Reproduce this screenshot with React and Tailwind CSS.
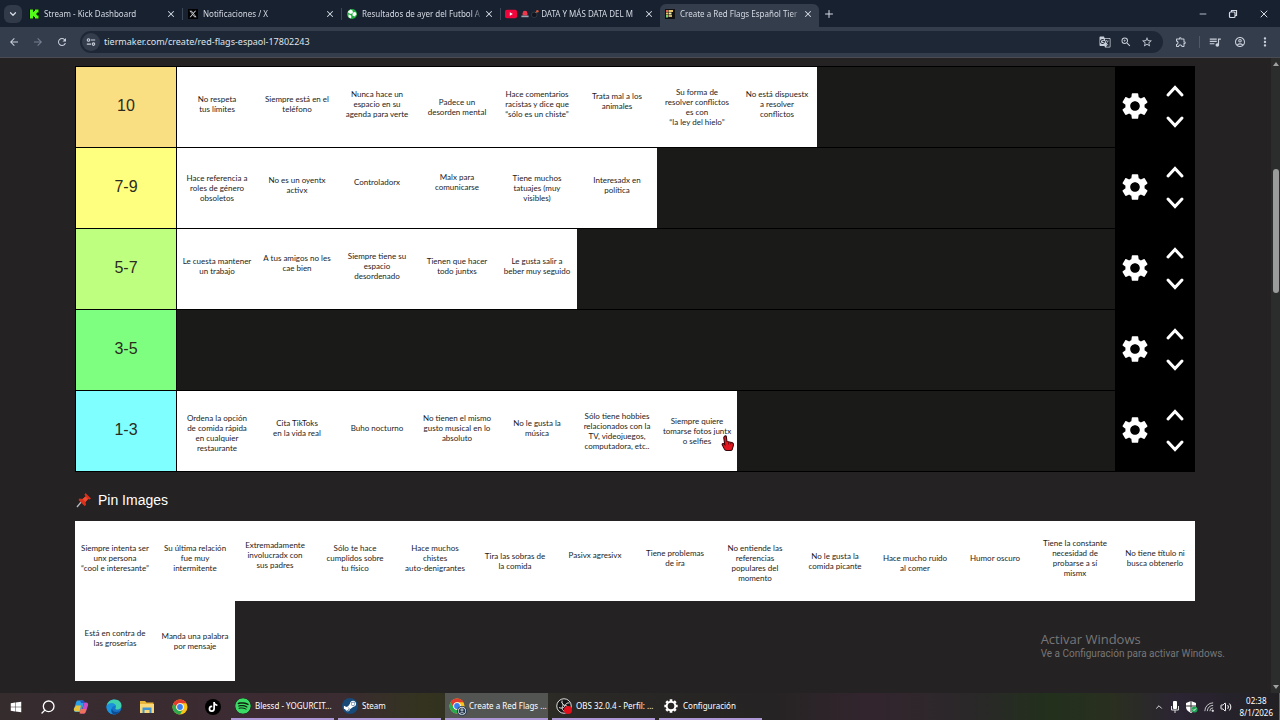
import { useState } from "react";
import {
  MdArrowBack,
  MdArrowForward,
  MdRefresh,
  MdGTranslate,
  MdZoomIn,
  MdStarBorder,
  MdOutlineExtension,
  MdQueueMusic,
  MdOutlineAccountCircle,
  MdMoreVert,
  MdSettings,
} from "react-icons/md";
import { FaXTwitter, FaTiktok, FaSpotify, FaSteamSymbol, FaWindows } from "react-icons/fa6";
import { ChevronDown, ChevronUp, X, Plus, Minus, Search, Volume2 } from "lucide-react";

// vertical placement of the text inside a card
const PLACE = {
  high: "pb-3",
  mid: "pb-1.5",
  low: "",
  lower: "pt-1",
};

const TIERS = [
  {
    label: "10",
    color: "bg-[#fadf82]",
    cards: [
      { text: "No respeta\ntus límites" },
      { text: "Siempre está en el\nteléfono" },
      { text: "Nunca hace un\nespacio en su\nagenda para verte" },
      { text: "Padece un\ndesorden mental", at: "low" },
      { text: "Hace comentarios\nracistas y dice que\n“sólo es un chiste”" },
      { text: "Trata mal a los\nanimales", at: "high" },
      { text: "Su forma de\nresolver conflictos\nes con\n“la ley del hielo”", at: "low" },
      { text: "No está dispuestx\na resolver\nconflictos" },
    ],
  },
  {
    label: "7-9",
    color: "bg-[#ffff7f]",
    cards: [
      { text: "Hace referencia a\nroles de género\nobsoletos", at: "low" },
      { text: "No es un oyentx\nactivx" },
      { text: "Controladorx", at: "high" },
      { text: "Malx para\ncomunicarse", at: "high" },
      { text: "Tiene muchos\ntatuajes (muy\nvisibles)", at: "low" },
      { text: "Interesadx en\npolítica" },
    ],
  },
  {
    label: "5-7",
    color: "bg-[#bfff7f]",
    cards: [
      { text: "Le cuesta mantener\nun trabajo" },
      { text: "A tus amigos no les\ncae bien", at: "high" },
      { text: "Siempre tiene su\nespacio\ndesordenado" },
      { text: "Tienen que hacer\ntodo juntxs" },
      { text: "Le gusta salir a\nbeber muy seguido" },
    ],
  },
  { label: "3-5", color: "bg-[#7fff7f]", cards: [] },
  {
    label: "1-3",
    color: "bg-[#7fffff]",
    cards: [
      { text: "Ordena la opción\nde comida rápida\nen cualquier\nrestaurante", at: "lower" },
      { text: "Cita TikToks\nen la vida real" },
      { text: "Buho nocturno" },
      { text: "No tienen el mismo\ngusto musical en lo\nabsoluto" },
      { text: "No le gusta la\nmúsica" },
      { text: "Sólo tiene hobbies\nrelacionados con la\nTV, videojuegos,\ncomputadora, etc..", at: "low" },
      { text: "Siempre quiere\ntomarse fotos juntx\no selfies", at: "low" },
    ],
  },
];

const POOL = [
  { text: "Siempre intenta ser\nunx persona\n“cool e interesante”" },
  { text: "Su última relación\nfue muy\nintermitente" },
  { text: "Extremadamente\ninvolucradx con\nsus padres", at: "high" },
  { text: "Sólo te hace\ncumplidos sobre\ntu físico" },
  { text: "Hace muchos\nchistes\nauto-denigrantes" },
  { text: "Tira las sobras de\nla comida", at: "low" },
  { text: "Pasivx agresivx", at: "high" },
  { text: "Tiene problemas\nde ira" },
  { text: "No entiende las\nreferencias\npopulares del\nmomento", at: "lower" },
  { text: "No le gusta la\ncomida picante", at: "low" },
  { text: "Hace mucho ruido\nal comer", at: "lower" },
  { text: "Humor oscuro" },
  { text: "Tiene la constante\nnecesidad de\nprobarse a sí\nmismx" },
  { text: "No tiene título ni\nbusca obtenerlo" },
  { text: "Está en contra de\nlas groserías" },
  { text: "Manda una palabra\npor mensaje", at: "low" },
];

function Card({ text, at = "mid" }) {
  return (
    <div
      className={`flex h-20 w-20 shrink-0 items-center justify-center whitespace-pre bg-white text-center font-[Lato,sans-serif] text-[8px] leading-[10px] text-[#1c1c1c] ${PLACE[at]}`}
    >
      {text}
    </div>
  );
}

function KickIcon() {
  return (
    <svg viewBox="0 0 20 20" className="size-2.5">
      <rect width="20" height="20" fill="#0b1a08" />
      <path d="M2 1h6v5h2V4h2V1h7v6h-3v2h-2v2h2v2h3v6h-7v-3h-2v-2H8v5H2z" fill="#53fc18" />
    </svg>
  );
}

function XIcon() {
  return (
    <span className="grid size-2.5 place-items-center bg-black">
      <FaXTwitter className="size-2 text-gray-300" />
    </span>
  );
}

function BallIcon() {
  return (
    <svg viewBox="0 0 20 20" className="size-2.5">
      <circle cx="10" cy="10" r="10" fill="#1fae3c" />
      <path d="M7 1l4 2 1 4-4 3-5-2-1-3zM14 6l4 1 1 4-4 4-4-2 0-4zM3 11l4 1 2 4-2 3-4-3z" fill="#fff" />
    </svg>
  );
}

function YoutubeIcon() {
  return (
    <svg viewBox="0 0 20 20" className="size-3">
      <rect y="3" width="20" height="14" rx="3" fill="#f0043c" />
      <path d="M8 7l5 3-5 3z" fill="#fff" />
    </svg>
  );
}

function TierIcon() {
  return (
    <svg viewBox="0 0 20 20" className="size-2.5">
      <rect width="20" height="20" fill="#111" />
      <path d="M2 2h4v4H2z" fill="#e5645c" />
      <path d="M7 2h9v4H7zM2 7h5v4H2z" fill="#e9c36a" />
      <path d="M8 7h5v4H8z" fill="#f4f0b0" />
      <path d="M2 12h4v5H2z" fill="#7ccf6d" />
      <path d="M7 12h7v4H7z" fill="#c9b26c" />
    </svg>
  );
}

function Siren() {
  return (
    <svg viewBox="0 0 20 20" className="inline size-2">
      <path d="M4 14V8a6 6 0 0112 0v6z" fill="#f0364b" />
      <path d="M1 14h18v4H1z" fill="#9aa3b2" />
    </svg>
  );
}

function Bomb() {
  return (
    <svg viewBox="0 0 20 20" className="inline size-2">
      <circle cx="8" cy="12" r="7" fill="#11161d" stroke="#566172" strokeWidth="1" />
      <path d="M12 7l3-4" stroke="#b0b7c2" strokeWidth="2" />
      <circle cx="16" cy="3" r="3" fill="#e05630" />
    </svg>
  );
}

const TABS = [
  { icon: <KickIcon />, title: "Stream - Kick Dashboard" },
  { icon: <XIcon />, title: "Notificaciones / X" },
  { icon: <BallIcon />, title: "Resultados de ayer del Futbol A" },
  {
    icon: <YoutubeIcon />,
    title: (
      <>
        <Siren /> <Bomb /> DATA Y MÁS DATA DEL M
      </>
    ),
  },
  { icon: <TierIcon />, title: "Create a Red Flags Español Tier", active: true },
];

function TabStrip() {
  return (
    <div className="flex h-[27px] items-end bg-[#182130] text-[#d5dae3]">
      <div className="flex h-full w-6 items-center pl-1">
        <button aria-label="Buscar pestañas" className="grid size-[18px] place-items-center rounded-md bg-[#303a49]">
          <ChevronDown className="size-2.5" strokeWidth={3} />
        </button>
      </div>
      {TABS.map((t, i) => (
        <div
          key={i}
          className={`flex h-[23px] w-[159px] items-center gap-1 pr-1.5 pb-1 pl-1 ${t.active ? "rounded-t-md bg-[#343d4c]" : ""}`}
        >
          <span className="grid w-3 shrink-0 place-items-center">{t.icon}</span>
          <span className="-mr-1 min-w-0 flex-1 overflow-hidden mask-r-from-90% text-[8px] leading-3 whitespace-nowrap">
            {t.title}
          </span>
          <button aria-label="Cerrar pestaña">
            <X className="size-2.5" strokeWidth={2.5} />
          </button>
          {!t.active && i < 3 && <span className="-mr-1.5 ml-0.5 h-3 w-px bg-[#3c4758]" />}
        </div>
      ))}
      <button aria-label="Nueva pestaña" className="ml-1 grid h-[27px] w-3 place-items-center">
        <Plus className="size-3" />
      </button>
      <div className="ml-auto flex h-[27px] items-center gap-5 pr-2.5">
        <button aria-label="Minimizar">
          <Minus className="size-2.5" />
        </button>
        <button aria-label="Restaurar">
          <svg viewBox="0 0 10 10" className="size-2.5" fill="none" stroke="currentColor" strokeWidth="1.2">
            <rect x="1.5" y="3" width="5.5" height="5.5" rx="1" />
            <path d="M3.5 3V1.5h5v5H7" />
          </svg>
        </button>
        <button aria-label="Cerrar">
          <X className="size-3" />
        </button>
      </div>
    </div>
  );
}

function Toolbar() {
  return (
    <div className="flex h-[31px] items-center border-b border-[#4b4b52] bg-[#343d4c] text-[#c9cfda]">
      <div className="flex items-center gap-3 pr-3 pl-2">
        <button aria-label="Atrás">
          <MdArrowBack className="size-3" />
        </button>
        <button aria-label="Adelante" className="text-[#778090]">
          <MdArrowForward className="size-3" />
        </button>
        <button aria-label="Recargar">
          <MdRefresh className="size-3" />
        </button>
      </div>
      <div className="flex h-[22px] flex-1 items-center rounded-full bg-[#1e2735] pr-2.5 pl-0.5">
        <button aria-label="Información del sitio" className="grid size-[18px] place-items-center rounded-full bg-[#343d4c]">
          <svg viewBox="0 0 12 12" className="size-2.5" fill="none" stroke="currentColor" strokeWidth="1.3">
            <circle cx="3" cy="3.5" r="1.5" />
            <path d="M6 3.5h5M1 8.5h5" />
            <circle cx="9" cy="8.5" r="1.5" />
          </svg>
        </button>
        <input
          aria-label="Dirección"
          defaultValue="tiermaker.com/create/red-flags-espaol-17802243"
          className="min-w-0 flex-1 bg-transparent px-1 text-[9px] leading-4 text-[#dfe3ea] outline-none"
        />
        <div className="flex items-center gap-[9px]">
          <button aria-label="Traducir">
            <MdGTranslate className="size-3" />
          </button>
          <button aria-label="Zoom">
            <MdZoomIn className="size-3" />
          </button>
          <button aria-label="Marcador">
            <MdStarBorder className="size-3" />
          </button>
        </div>
      </div>
      <div className="flex items-center gap-3 pr-2 pl-3">
        <button aria-label="Extensiones">
          <MdOutlineExtension className="size-3" />
        </button>
        <span className="-mr-1 h-3 w-px bg-[#4f5969]" />
        <button aria-label="Multimedia">
          <MdQueueMusic className="size-3.5" />
        </button>
        <button aria-label="Perfil">
          <MdOutlineAccountCircle className="size-3" />
        </button>
        <button aria-label="Menú">
          <MdMoreVert className="size-3.5" />
        </button>
      </div>
    </div>
  );
}

function Arrow({ up }) {
  return (
    <svg viewBox="0 0 20 14" className="h-3.5 w-5" fill="none" stroke="#fff" strokeWidth="3" strokeLinecap="round">
      {up ? <path d="M3 11l7-7.500 7 7.500" /> : <path d="M3 3l7 7.500 7-7.500" />}
    </svg>
  );
}

function TierRow({ label, color, cards, onUp, onDown }) {
  return (
    <div className="flex h-[81px] border-b border-black bg-[#1a1a19]">
      <div
        className={`flex w-[101px] shrink-0 items-center justify-center border-r border-black pb-0.5 text-base text-[#2b2b20] ${color}`}
      >
        {label}
      </div>
      <div className="flex min-w-0 flex-1">
        {cards.map((c) => (
          <Card key={c.text} {...c} />
        ))}
      </div>
      <div className="-mb-px flex w-20 shrink-0 bg-black pb-[3px]">
        <button aria-label={`Opciones ${label}`} className="grid w-10 place-items-center text-white">
          <MdSettings className="size-8" />
        </button>
        <div className="flex w-10 flex-col items-center justify-center gap-[17px]">
          <button aria-label={`Subir ${label}`} onClick={onUp}>
            <Arrow up />
          </button>
          <button aria-label={`Bajar ${label}`} onClick={onDown}>
            <Arrow />
          </button>
        </div>
      </div>
    </div>
  );
}

function PushPin() {
  return (
    <svg viewBox="0 0 32 32" className="size-4">
      <path d="M12 18L2 30" stroke="#b8bcc2" strokeWidth="2.5" />
      <path d="M19 2l11 11-3 2-3-1-5 6 1 6-3 2L5 16l2-3 6 1 6-5-2-4z" fill="#d8321d" />
      <path d="M19 9l5 5-5 6-6-6z" fill="#f04a32" />
    </svg>
  );
}

function Watermark() {
  return (
    <div className="absolute right-[55px] bottom-8 text-[#777]">
      <div className="font-['Open_Sans',sans-serif] text-[13px] leading-4">Activar Windows</div>
      <div className="font-[Roboto,sans-serif] text-[10px] leading-[14px]">
        Ve a Configuración para activar Windows.
      </div>
    </div>
  );
}

function Scrollbar() {
  return (
    <div className="flex w-[9px] shrink-0 flex-col items-center justify-between bg-[#2b2d2c] py-1">
      <svg viewBox="0 0 6 4" className="h-1 w-1.5">
        <path d="M3 0l3 4H0z" fill="#a0a0a0" />
      </svg>
      <div className="flex w-full flex-1 flex-col items-center">
        <div className="basis-1/6" />
        <div className="w-1.5 basis-1/5 rounded-full bg-[#9b9b9b]" />
      </div>
      <svg viewBox="0 0 6 4" className="h-1 w-1.5">
        <path d="M0 0h6L3 4z" fill="#a0a0a0" />
      </svg>
    </div>
  );
}

function CopilotIcon() {
  return (
    <svg viewBox="0 0 32 32" className="size-4">
      <path d="M10 3h9c2 0 3 2 3 4l-4 15c-1 3-2 4-4 4H6c-4 0-5-3-4-6L6 7c1-3 2-4 4-4z" fill="#2a9fe6" />
      <path d="M6 13h10l-3 12H6c-4 0-5-3-4-6z" fill="#e8c33b" />
      <path d="M22 7h4c4 0 5 3 4 6l-4 12c-1 3-2 4-4 4h-9c3 0 4-2 5-5z" fill="#c84cc4" />
      <path d="M15 20h12l-2 5c-1 3-2 4-4 4h-8z" fill="#f0705a" />
      <path d="M14 3h6c2 0 3 2 4 5h-8z" fill="#2456c8" />
    </svg>
  );
}

function EdgeIcon() {
  return (
    <svg viewBox="0 0 32 32" className="size-4">
      <circle cx="16" cy="16" r="15" fill="#1674c9" />
      <path d="M1 14C3 5 10 1 17 1c9 0 14 6 14 12 0 5-4 8-8 8-3 0-5-1-4-3 3-5-2-9-7-9-6 0-10 3-11 5z" fill="#3fd0b0" />
      <path d="M1 14c3-5 8-6 12-5 4 0 7 3 7 6-5-3-10 2-8 8 1 3 4 6 8 7C9 33 0 25 1 14z" fill="#1c92dd" />
      <path d="M12 19c0 7 8 9 16 5-3 5-8 7-12 7-5-2-7-8-4-12z" fill="#0d4d95" />
    </svg>
  );
}

function FolderIcon() {
  return (
    <svg viewBox="0 0 32 32" className="size-4">
      <path d="M2 4h10l3 3h14v21H2z" fill="#e9b43a" />
      <path d="M2 10h28v18H2z" fill="#fbd877" />
      <path d="M7 17h18v11h-4v-6H11v6H7z" fill="#3f94d6" />
    </svg>
  );
}

function ChromeIcon() {
  return (
    <svg viewBox="0 0 32 32" className="size-4">
      <circle cx="16" cy="16" r="15" fill="#fbc418" />
      <path d="M3 8.500A15 15 0 0129 8.500H16a7.500 7.500 0 00-6.500 11.300z" fill="#e33b2e" />
      <path d="M3 8.500A15 15 0 0016 31l6.500-11.300A7.500 7.500 0 019.500 19.800z" fill="#2da94f" />
      <circle cx="16" cy="16" r="7.500" fill="#fff" />
      <circle cx="16" cy="16" r="5.800" fill="#3c7fee" />
    </svg>
  );
}

function ObsIcon() {
  return (
    <svg viewBox="0 0 32 32" className="size-4">
      <circle cx="16" cy="16" r="14.500" fill="#161616" stroke="#ddd" strokeWidth="2" />
      <path d="M12 5c-1 7 3 10 7 10 4 1 7 4 7 8M6 19c6 3 11 0 12-4 2-4 5-6 9-5M19 27c-6-1-8-6-6-10 2-3 1-6-2-8" fill="none" stroke="#ddd" strokeWidth="2" />
      <circle cx="24" cy="24" r="8" fill="#e3101c" />
    </svg>
  );
}

function ChromeProfileIcon() {
  return (
    <span className="relative">
      <ChromeIcon />
      <MdOutlineAccountCircle className="absolute -right-0.5 -bottom-0.5 size-2.5 rounded-full bg-[#22364c] text-[#cfd6df]" />
    </span>
  );
}

function SpotifyIcon() {
  return <FaSpotify className="size-4 rounded-full bg-[#10210f] text-[#3bdc66]" />;
}

function SteamIcon() {
  return (
    <span className="grid size-4 place-items-center rounded-full bg-[#174a78]">
      <FaSteamSymbol className="size-3.5 text-white" />
    </span>
  );
}

function GearIcon() {
  return (
    <svg viewBox="0 0 24 24" className="size-4" fill="none" stroke="#fff">
      <circle cx="12" cy="12" r="6.5" strokeWidth="3" />
      <path
        d="M12 2v3M12 19v3M2 12h3M19 12h3M4.900 4.900L7 7M17 17l2.100 2.100M4.900 19.100L7 17M17 7l2.100-2.100"
        strokeWidth="4"
      />
    </svg>
  );
}

const PINNED = [
  { name: "Inicio", icon: <FaWindows className="size-3 text-white" /> },
  { name: "Buscar", icon: <Search className="size-4 -scale-x-100 text-white" /> },
  { name: "Copilot", icon: <CopilotIcon /> },
  { name: "Edge", icon: <EdgeIcon /> },
  { name: "Explorador", icon: <FolderIcon /> },
  { name: "Chrome", icon: <ChromeIcon /> },
  {
    name: "TikTok",
    icon: (
      <span className="grid size-4 place-items-center rounded-full bg-black">
        <FaTiktok className="size-2.5 text-white" />
      </span>
    ),
  },
];

const WINDOWS = [
  { title: "Blessd - YOGURCIT...", icon: <SpotifyIcon /> },
  { title: "Steam", icon: <SteamIcon /> },
  { title: "Create a Red Flags ...", icon: <ChromeProfileIcon />, active: true },
  { title: "OBS 32.0.4 - Perfil: ...", icon: <ObsIcon /> },
  { title: "Configuración", icon: <GearIcon /> },
];

function Taskbar() {
  return (
    <div className="flex h-[27px] items-stretch bg-[linear-gradient(90deg,#352c2e_0%,#3c2b32_18%,#3a2c30_27%,#33331f_33%,#2b2926_45%,#252323_60%,#33252e_68%,#2a2829_76%,#22301c_82%,#2a2f20_87%,#2b2433_92%,#212023_100%)] text-white">
      <div className="flex pr-0.5">
        {PINNED.map((p) => (
          <button key={p.name} aria-label={p.name} className="grid w-[33px] place-items-center first:w-[31px]">
            {p.icon}
          </button>
        ))}
      </div>
      <div className="flex gap-1">
        {WINDOWS.map((w) => (
          <button
            key={w.title}
            className={`flex w-[103px] items-center gap-1 border-b-2 border-[#ad97d6] pl-1 text-[8px] whitespace-nowrap ${w.active ? "bg-[#535552]" : ""}`}
          >
            {w.icon}
            {w.title}
          </button>
        ))}
      </div>
      <div className="ml-auto flex items-center gap-1.5">
        <ChevronUp className="size-2.5" />
        <svg viewBox="0 0 10 12" className="h-3 w-2.5">
          <rect x="3" y="0" width="4" height="8" rx="1" fill="#fff" />
          <path d="M1.500 5v4h7V5M5 9v3" fill="none" stroke="#ddd" />
        </svg>
        <svg viewBox="0 0 12 12" className="size-3">
          <path d="M5 0l5 2v4c0 3-2 4-5 6-3-2-5-3-5-6V2z" fill="#fff" />
          <path d="M5 0v11M0 5h10" stroke="#333" />
          <circle cx="8.500" cy="8.500" r="3" fill="#21a356" />
          <path d="M7 8.500l1 1 2-2" fill="none" stroke="#fff" />
        </svg>
        <svg viewBox="0 0 12 12" className="size-2.5" fill="none" stroke="#cfcfcf" strokeWidth="1.1">
          <path d="M1 11A10 10 0 0111 1M4 11a7 7 0 017-7M7 11a4 4 0 014-4" />
          <circle cx="10.500" cy="10.500" r="1" fill="#fff" />
        </svg>
        <Volume2 className="size-3" />
        <div className="ml-0.5 text-center text-[8px] leading-3">
          <div>02:38</div>
          <div>8/1/2026</div>
        </div>
        <span className="h-[27px] w-px bg-[#666]" />
      </div>
    </div>
  );
}

function HandCursor() {
  return (
    <svg viewBox="0 0 24 30" className="pointer-events-none absolute top-[377px] left-[721px] h-4 w-3.5">
      <path
        d="M6 2c2-1 3 0 3 2l1 8 9 2c3 1 4 3 3 6l-2 7c-1 2-2 2-4 2H9c-2 0-3-1-4-3l-4-8c0-2 2-3 5 0L4 5c0-1 1-2 2-3z"
        fill="#e3151f"
        stroke="#3a0508"
        strokeWidth="2"
      />
      <path d="M13 13v5M17 14v4" stroke="#6b0a10" strokeWidth="1.500" />
    </svg>
  );
}

export default function App() {
  const [tiers, setTiers] = useState(TIERS);

  const move = (i, step) => {
    const j = i + step;
    if (j < 0 || j >= tiers.length) return;
    const next = [...tiers];
    [next[i], next[j]] = [next[j], next[i]];
    setTiers(next);
  };

  return (
    <div className="flex h-screen flex-col overflow-hidden bg-[#242223] font-['Noto_Sans',sans-serif]">
      <TabStrip />
      <Toolbar />
      <div className="relative flex min-h-0 flex-1">
        <main className="min-w-0 flex-1 overflow-hidden pt-2 pr-[76px] pl-[75px] font-['Liberation_Sans',Arial,sans-serif]">
          <div className="border-t border-l border-black">
            {tiers.map((t, i) => (
              <TierRow key={t.label} {...t} onUp={() => move(i, -1)} onDown={() => move(i, 1)} />
            ))}
          </div>
          <h2 className="flex h-[49px] items-center gap-1.5 pt-1.5 pl-px text-sm text-white">
            <PushPin />
            Pin Images
          </h2>
          <div className="flex flex-wrap">
            {POOL.map((c) => (
              <Card key={c.text} {...c} />
            ))}
          </div>
        </main>
        <Scrollbar />
        <Watermark />
        <HandCursor />
      </div>
      <Taskbar />
    </div>
  );
}
